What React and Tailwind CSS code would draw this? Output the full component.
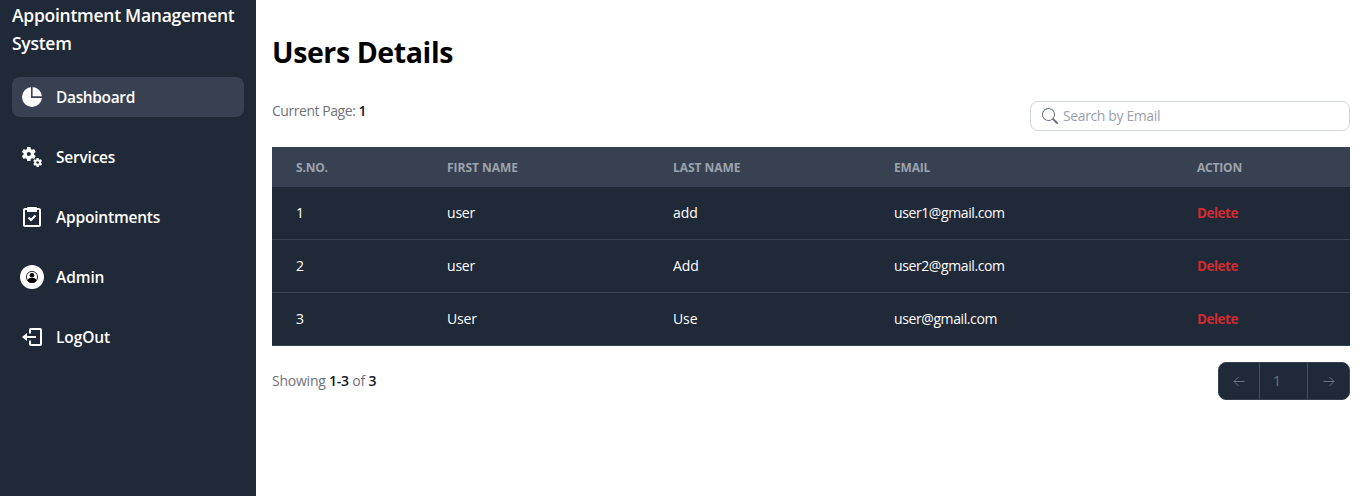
import React from "react";
import { MdMiscellaneousServices } from "react-icons/md";
import { BiTask } from "react-icons/bi";
import { BsSearch } from "react-icons/bs";

function PieIcon() {
  return (
    <svg className="size-6" viewBox="0 0 24 24">
      <circle cx="12" cy="12" r="10" fill="#fff" />
      <path d="M11.8 1v11.1H23" fill="none" stroke="#374151" strokeWidth="1.6" />
    </svg>
  );
}

function AdminIcon() {
  return (
    <svg className="size-6" viewBox="0 0 24 24">
      <circle cx="12" cy="12" r="12" fill="#fff" />
      <circle cx="12" cy="12" r="5.6" fill="none" stroke="#000" strokeWidth="0.8" />
      <circle cx="12" cy="10.3" r="2.3" fill="#000" />
      <path d="M7.3 15.4c.6-1.9 2.5-2.6 4.7-2.6s4.1.7 4.7 2.6A5.8 5.8 0 0 1 12 17.9a5.8 5.8 0 0 1-4.7-2.5z" fill="#000" />
    </svg>
  );
}

function ExitIcon() {
  return (
    <svg className="size-6" viewBox="0 0 24 24">
      <path d="M10 8.5V5a1 1 0 0 1 1-1h9a1 1 0 0 1 1 1v14a1 1 0 0 1-1 1h-9a1 1 0 0 1-1-1v-3.5" fill="none" stroke="#fff" strokeWidth="2" />
      <path d="m2 12 5-4v3h9v2H7v3z" fill="#fff" />
    </svg>
  );
}

function Arrow({ d }) {
  return (
    <svg className="size-3" viewBox="0 0 12 12" fill="none" stroke="currentColor" strokeWidth="1">
      <path d={d} />
    </svg>
  );
}

const nav = [
  { label: "Dashboard", icon: <PieIcon />, row: "bg-[#374151]", text: "tracking-[-0.36px]" },
  { label: "Services", icon: <MdMiscellaneousServices className="size-6" />, row: "", text: "tracking-[-0.22px]" },
  { label: "Appointments", icon: <BiTask className="size-6" />, row: "", text: "tracking-[-0.2px]" },
  { label: "Admin", icon: <AdminIcon />, row: "", text: "tracking-[-0.1px]" },
  { label: "LogOut", icon: <ExitIcon />, row: "", text: "tracking-[-0.1px]" },
];

const users = [
  ["1", "user", "add", "user1@gmail.com"],
  ["2", "user", "Add", "user2@gmail.com"],
  ["3", "User", "Use", "user@gmail.com"],
];

const cellTracking = ["", "tracking-[-0.2px]", "tracking-[-0.1px]", "tracking-[-0.4px]"];

const columns = "grid grid-cols-[151px_226px_221px_303px_1fr] pl-6";

export default function App() {
  return (
    <div className="flex h-[496px] overflow-hidden bg-white font-['Open_Sans','Noto_Sans',sans-serif]">
      <aside className="w-64 shrink-0 bg-[#1f2937] px-3 pt-px text-white">
        <h2 className="whitespace-nowrap text-[17.5px] leading-7 font-semibold tracking-[-0.27px]">
          Appointment Management
          <br />
          System
        </h2>
        <nav className="mt-5 flex flex-col gap-5">
          {nav.map((n) => (
            <a key={n.label} className={`flex h-10 items-center gap-3 rounded-lg px-2 ${n.row}`}>
              {n.icon}
              <span className={`text-[15.5px] leading-6 font-semibold ${n.text}`}>{n.label}</span>
            </a>
          ))}
        </nav>
      </aside>
      <main className="flex-1 px-4 pt-8">
        <h1 className="text-[28.5px] leading-10 font-bold tracking-[-0.4px] text-black">Users Details</h1>
        <div className="mt-[29px] flex items-start justify-between">
          <p className="text-sm leading-5 tracking-[-0.45px] text-[#6f7278]">
            Current Page: <span className="font-semibold text-gray-900">1</span>
          </p>
          <label className="flex h-[30px] w-80 items-center rounded-lg border border-gray-300 pl-[11px]">
            <BsSearch className="size-4 text-gray-500" />
            <span className="ml-[5px] text-sm tracking-[-0.38px] text-gray-400">Search by Email</span>
          </label>
        </div>
        <div className="mt-4 bg-[#1f2937] text-sm text-white">
          <div className={`${columns} h-10 items-center bg-[#374151] pt-px text-xs font-bold tracking-[-0.03px] text-[#9ca3af]`}>
            <span className="tracking-[-0.2px]">S.NO.</span>
            <span>FIRST NAME</span>
            <span>LAST NAME</span>
            <span className="tracking-[-0.2px]">EMAIL</span>
            <span className="tracking-[-0.2px]">ACTION</span>
          </div>
          {users.map((u) => (
            <div key={u[0]} className={`${columns} h-[53px] items-center border-b border-[#374151]`}>
              {u.map((c, i) => (
                <span key={i} className={cellTracking[i]}>{c}</span>
              ))}
              <span className="pt-px text-[13.5px] font-bold tracking-[-0.5px] text-[#d02c31]">Delete</span>
            </div>
          ))}
        </div>
        <div className="mt-4 flex items-start justify-between">
          <p className="mt-[9px] text-sm leading-5 tracking-[-0.23px] text-[#6f7278]">
            Showing <span className="font-semibold text-gray-900">1-3</span> of{" "}
            <span className="font-semibold text-gray-900">3</span>
          </p>
          <div className="flex h-[38px] w-[132px] overflow-hidden rounded-lg border border-[#374151] bg-[#1f2937] text-sm text-[#6b7280]">
            <span className="flex w-[41px] items-center justify-center border-r border-[#465160]">
              <Arrow d="M11.5 6.500H1M5.500 2 1 6.500 5.500 11" />
            </span>
            <span className="flex w-12 items-center border-r border-[#465160] pl-[13px]">1</span>
            <span className="flex flex-1 items-center justify-center">
              <Arrow d="M.5 6.500H11M6.500 2 11 6.500 6.500 11" />
            </span>
          </div>
        </div>
      </main>
    </div>
  );
}
